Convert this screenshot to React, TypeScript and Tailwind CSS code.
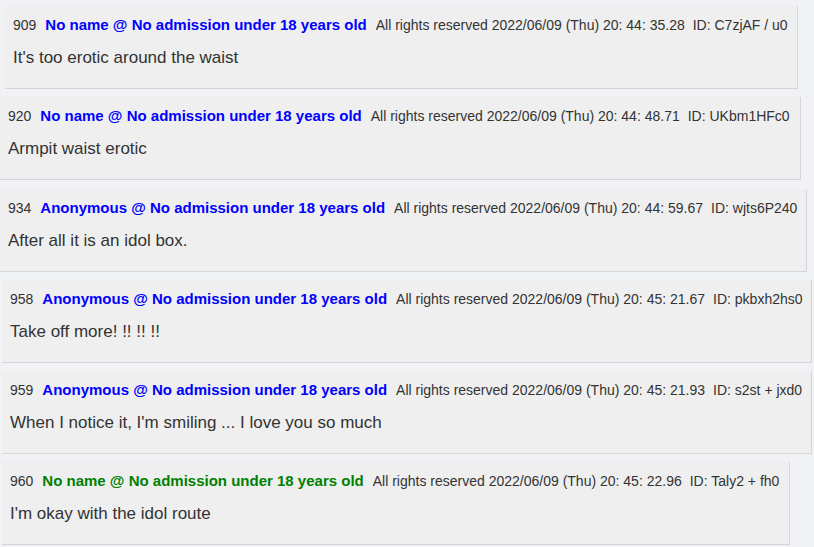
import React from "react";

type Post = {
  no: string;
  name: string;
  green?: boolean;
  date: string;
  id: string;
  body: string;
  box: string;
};

const posts: Post[] = [
  { no: "909", name: "No name @ No admission under 18 years old", date: "All rights reserved 2022/06/09 (Thu) 20: 44: 35.28", id: "ID: C7zjAF / u0", body: "It's too erotic around the waist", box: "ml-[5px] w-[793px] mt-[6px]" },
  { no: "920", name: "No name @ No admission under 18 years old", date: "All rights reserved 2022/06/09 (Thu) 20: 44: 48.71", id: "ID: UKbm1HFc0", body: "Armpit waist erotic", box: "ml-0 w-[801px] mt-[8px]" },
  { no: "934", name: "Anonymous @ No admission under 18 years old", date: "All rights reserved 2022/06/09 (Thu) 20: 44: 59.67", id: "ID: wjts6P240", body: "After all it is an idol box.", box: "ml-0 w-[807px] mt-[9px]" },
  { no: "958", name: "Anonymous @ No admission under 18 years old", date: "All rights reserved 2022/06/09 (Thu) 20: 45: 21.67", id: "ID: pkbxh2hs0", body: "Take off more! !! !! !!", box: "ml-[2px] w-[810px] mt-[8px]" },
  { no: "959", name: "Anonymous @ No admission under 18 years old", date: "All rights reserved 2022/06/09 (Thu) 20: 45: 21.93", id: "ID: s2st + jxd0", body: "When I notice it, I'm smiling ... I love you so much", box: "ml-[2px] w-[810px] mt-[8px]" },
  { no: "960", name: "No name @ No admission under 18 years old", green: true, date: "All rights reserved 2022/06/09 (Thu) 20: 45: 22.96", id: "ID: Taly2 + fh0", body: "I'm okay with the idol route", box: "ml-[2px] w-[788px] mt-[8px]" },
];

export default function App() {
  return (
    <div
      className="w-[814px] h-[547px] overflow-hidden bg-[#f1f2f6] flex flex-col"
      style={{ fontFamily: '"Liberation Sans", Arial, sans-serif' }}
    >
      {posts.map((p) => (
        <div
          key={p.no}
          className={`${p.box} h-[83px] shrink-0 bg-[#efefef] border-r border-b border-[#d6d6d6] pl-[8px] pt-[9px]`}
        >
          <div className="flex items-baseline h-[20px] leading-[20px] text-[#333] whitespace-nowrap">
            <span className="text-[14px] mr-[9px]">{p.no}</span>
            <span className={`text-[15px] font-bold mr-[9px] ${p.green ? "text-[#008000]" : "text-[#0000ff]"}`}>{p.name}</span>
            <span className="text-[14px] mr-[8px]">{p.date}</span>
            <span className="text-[14px]">{p.id}</span>
          </div>
          <div className="mt-[11px] text-[17px] leading-[24px] text-[#333]">{p.body}</div>
        </div>
      ))}
    </div>
  );
}
